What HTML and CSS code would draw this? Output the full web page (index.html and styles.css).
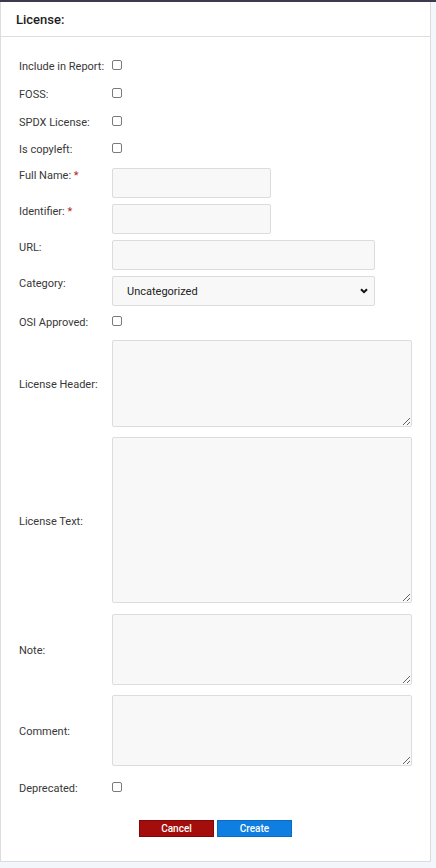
FILE: index.html
```html
<!DOCTYPE html>
<html lang="en">
<head>
<meta charset="utf-8">
<title>License</title>
<link rel="stylesheet" href="styles.css">
</head>
<body>
<div class="topbar"></div>
<div class="panel">
  <div class="panel-header">License:</div>
  <form class="panel-body">
    <div class="row row-check"><label class="lbl">Include in Report:</label><input class="cb" type="checkbox"></div>
    <div class="row row-check"><label class="lbl">FOSS:</label><input class="cb" type="checkbox"></div>
    <div class="row row-check"><label class="lbl">SPDX License:</label><input class="cb" type="checkbox"></div>
    <div class="row row-check"><label class="lbl">Is copyleft:</label><input class="cb" type="checkbox"></div>

    <div class="row row-text first-text"><label class="lbl lbl-top">Full Name: <span class="req">*</span></label><input class="field field-short" type="text"></div>
    <div class="row row-text"><label class="lbl lbl-top">Identifier: <span class="req">*</span></label><input class="field field-short" type="text"></div>
    <div class="row row-text"><label class="lbl lbl-top">URL:</label><input class="field field-long" type="text"></div>
    <div class="row row-text"><label class="lbl lbl-top">Category:</label>
      <div class="select-wrap">
        <select class="field field-long select"><option>Uncategorized</option></select>
        <svg class="chev" width="8" height="6" viewBox="0 0 8 6"><path d="M1 1.2 L4 4.2 L7 1.2" fill="none" stroke="#111" stroke-width="2"/></svg>
      </div>
    </div>

    <div class="row row-check row-osi"><label class="lbl">OSI Approved:</label><input class="cb" type="checkbox"></div>

    <div class="row row-area"><label class="lbl lbl-area">License Header:</label><textarea class="area area-header"></textarea></div>
    <div class="row row-area gap10"><label class="lbl lbl-area">License Text:</label><textarea class="area area-text"></textarea></div>
    <div class="row row-area gap11"><label class="lbl lbl-area">Note:</label><textarea class="area area-small"></textarea></div>
    <div class="row row-area gap10"><label class="lbl lbl-area">Comment:</label><textarea class="area area-small"></textarea></div>

    <div class="row row-check row-dep"><label class="lbl">Deprecated:</label><input class="cb" type="checkbox"></div>

    <div class="actions">
      <button type="button" class="btn btn-cancel">Cancel</button>
      <button type="button" class="btn btn-create">Create</button>
    </div>
  </form>
</div>
</body>
</html>
```

FILE: styles.css
```css
* { box-sizing: border-box; }

html, body {
  margin: 0;
  padding: 0;
}

body {
  background: #f3f6fa;
  font-family: Roboto, "Liberation Sans", Arial, sans-serif;
  color: #333;
  width: 436px;
}

.topbar {
  height: 2px;
  background: #3c3a53;
}

.panel {
  width: 431px;
  background: #fff;
  border: 1px solid #dcdcdc;
  border-top: none;
}

.panel-header {
  height: 35px;
  padding: 0 0 0 15px;
  display: flex;
  align-items: center;
  font-size: 13px;
  font-weight: 500;
  color: #1d1d1d;
  border-bottom: 1px solid #dedede;
}

.panel-body {
  margin: 0;
  padding: 16px 0 24px 18px;
  display: flex;
  flex-direction: column;
}

.row {
  display: flex;
}

.lbl {
  width: 93px;
  flex: none;
  font-size: 11px;
  line-height: 13px;
  color: #383838;
}

.lbl-top {
  padding-top: 1px;
}

.lbl-area {
  padding-top: 3px;
}

.req {
  color: #b3261e;
}

.row-check {
  height: 27.7px;
  align-items: center;
}

.cb {
  -webkit-appearance: none;
  appearance: none;
  width: 10px;
  height: 10px;
  margin: 0 0 3px 0;
  border: 1px solid #7a7a7a;
  border-radius: 2px;
  background: #fff;
}

.row-text {
  align-items: flex-start;
  margin-top: 6px;
}

.first-text {
  margin-top: 4.2px;
}

.field {
  height: 30px;
  margin: 0;
  border: 1px solid #dcdcdc;
  border-radius: 2px;
  background: #f8f8f8;
  font-family: inherit;
  font-size: 11px;
  color: #222;
  outline: none;
}

.field-short { width: 159px; }
.field-long { width: 263px; }

.select-wrap {
  position: relative;
  width: 263px;
  height: 30px;
}

.select {
  -webkit-appearance: none;
  appearance: none;
  padding: 1px 0 0 14px;
  display: block;
}

.chev {
  position: absolute;
  left: 248px;
  top: 12px;
}

.row-osi {
  height: 34px;
}

.row-area {
  align-items: center;
}

.gap10 { margin-top: 10px; }
.gap11 { margin-top: 11px; }

.area {
  width: 300px;
  margin: 0;
  border: 1px solid #dcdcdc;
  border-radius: 2px;
  background: #f8f8f8;
  resize: both;
  font-family: inherit;
  font-size: 11px;
  outline: none;
}

.area-header { height: 87px; }
.area-text { height: 166px; }
.area-small { height: 71px; }

.row-dep {
  height: 42px;
  padding-top: 3px;
}

.actions {
  margin: 12px 0 0 -18px;
  display: flex;
  justify-content: center;
  gap: 3px;
  width: 429px;
}

.btn {
  width: 75px;
  height: 17px;
  padding: 0;
  border: 1px solid;
  border-radius: 0;
  font-family: inherit;
  font-size: 10px;
  font-weight: 500;
  color: #fff;
  line-height: 15px;
}

.btn-cancel {
  background: #a50c0c;
  border-color: #7c0808;
}

.btn-create {
  background: #0e7ee0;
  border-color: #0b6cc2;
}
```
